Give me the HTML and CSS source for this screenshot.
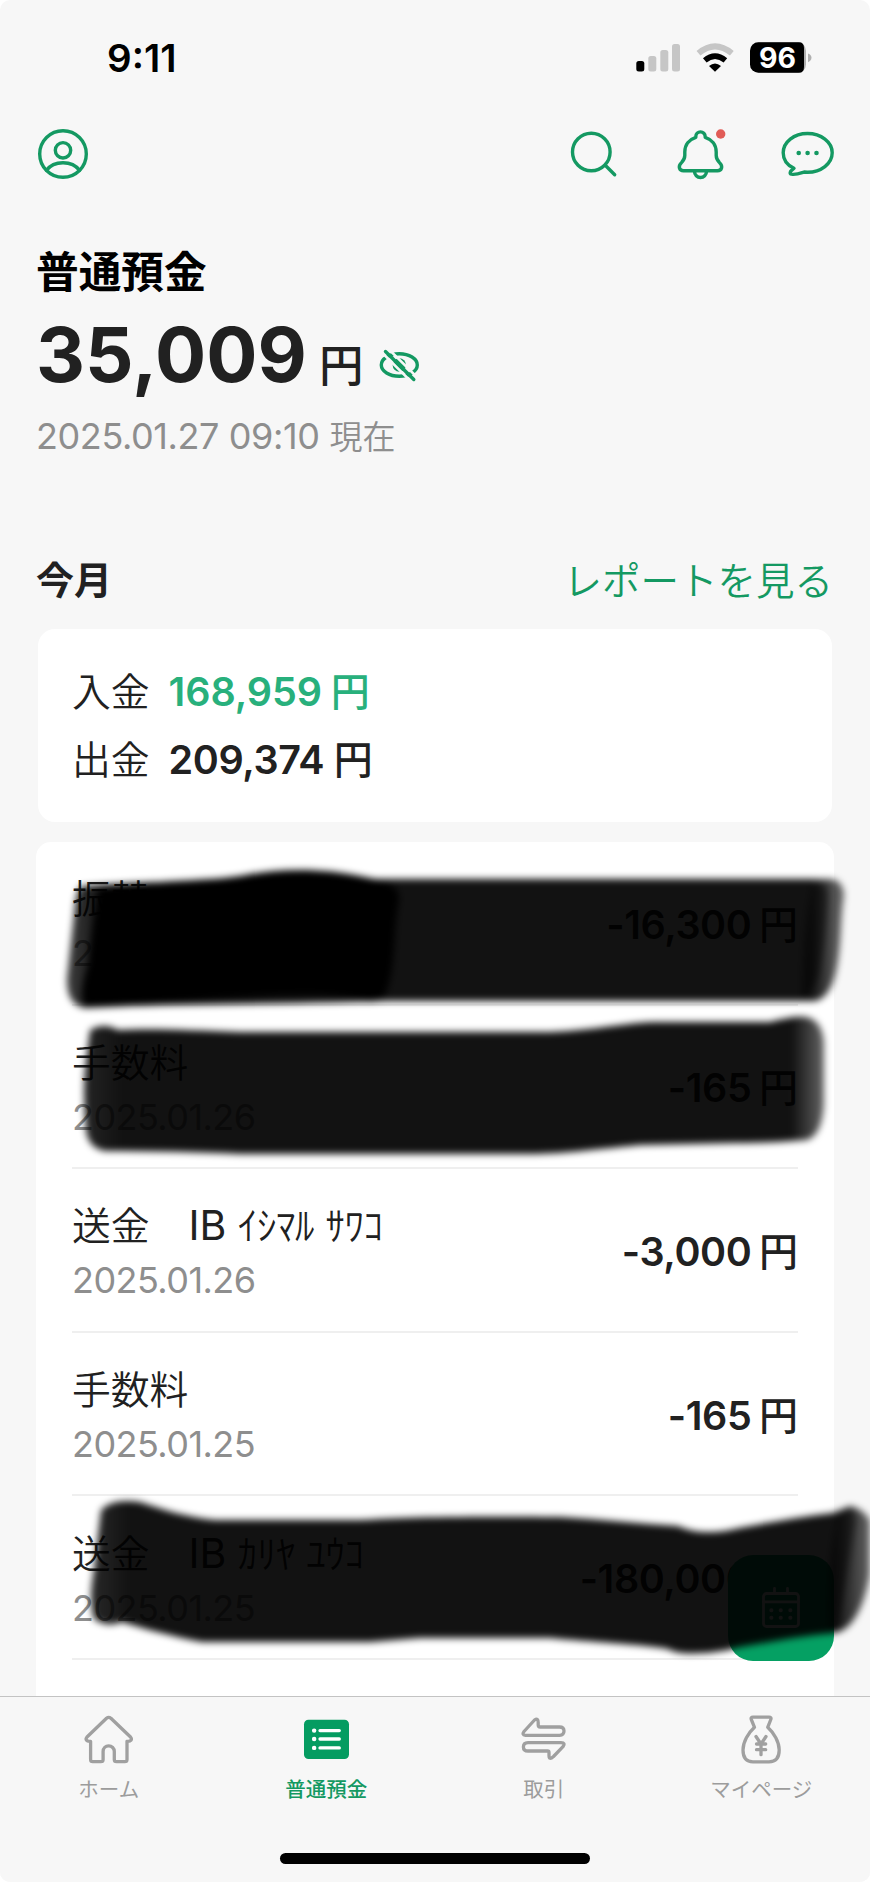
FILE: index.html
```html
<!DOCTYPE html>
<html lang="ja">
<head>
<meta charset="utf-8">
<title>普通預金</title>
<link rel="stylesheet" href="styles.css">
</head>
<body>
<div class="app">
  <div class="status">
    <span class="time">9:11</span>
    <svg class="status-icons" width="180" height="40" viewBox="634 38 180 40">
      <rect x="636.3" y="61" width="8" height="10.4" rx="2.5"/>
      <g fill="#c6c6c6">
        <rect x="648.3" y="56" width="8" height="15.4" rx="2.5"/>
        <rect x="660.3" y="50" width="8" height="21.4" rx="2.5"/>
        <rect x="672" y="44" width="8" height="27.4" rx="2.5"/>
      </g>
      <path d="M698.500 53.200Q715 39.500 731.800 53.200" fill="none" stroke="#c6c6c6" stroke-width="6"/>
      <path d="M704.800 60.400Q715 51.800 725.400 60.400" fill="none" stroke="#000" stroke-width="5.600"/>
      <path d="M709 66Q715 61 721 66L715 71.800Z"/>
      <rect x="750" y="42.300" width="56" height="30.500" rx="8.500" fill="#b0b0b0"/>
      <path d="M758.500 42.300H799Q804 42.300 804 48V67Q804 72.800 799 72.800H758.500A8.500 8.500 0 0 1 750 64.300V50.800A8.500 8.500 0 0 1 758.500 42.300Z"/>
      <path d="M808 53.500Q811.500 55 811.500 57.800T808 62.200Z" fill="#b0b0b0"/>
      <text class="battery" x="777.500" y="68" text-anchor="middle">96</text>
    </svg>
  </div>

  <div class="toolbar">
    <svg width="54" height="54" viewBox="36 127 54 54" class="line-icon">
      <circle cx="63" cy="154" r="23.300"/><circle cx="63" cy="150.300" r="7.700"/>
      <path d="M46.500 170.300Q52 162.700 63 162.700T79.500 170.300"/>
    </svg>
    <svg class="tools line-icon" width="270" height="54" viewBox="566 127 270 54">
      <circle cx="591.300" cy="152" r="18.800"/><path d="M605.500 165.500L614.700 174.700"/>
      <path d="M695.800 137.300V136.600A4.700 4.700 0 0 1 705.200 136.600V137.300C712 139.500 716.200 145 716.200 152V155.500C716.200 159 717.500 160.500 719.500 162.600C723.500 166.500 721.500 170.700 717.500 170.700H683.500C679.500 170.700 677.500 166.500 681.500 162.600C683.500 160.500 684.800 159 684.800 155.500V152C684.800 145 689 139.500 695.800 137.300ZM694.500 171.500A6 6 0 0 0 706.500 171.500"/>
      <circle cx="720.700" cy="134" r="4.700" class="alert"/>
      <path d="M794 168.300C786.500 165 783.200 158.700 783.200 152.800C783.200 142 794 133.500 807.500 133.500S832.200 142 832.200 152.800S821 172.300 807.500 172.300L804 172C799.500 173.500 795.500 175 791.500 174.200C789.500 173.700 790 171.500 791.500 170.500Z"/>
      <g class="dots"><circle cx="798.700" cy="153" r="2.300"/><circle cx="807.600" cy="153" r="2.300"/><circle cx="816.500" cy="153" r="2.300"/></g>
    </svg>
  </div>

  <div class="account">
    <h1 class="account-name">普通預金</h1>
    <div class="balance">
      <span class="balance-num">35,009</span><span class="balance-yen">円</span>
      <svg class="eye" width="42" height="34" viewBox="379 352 42 34">
        <ellipse cx="400.300" cy="369" rx="18" ry="11.300"/>
        <circle cx="400.300" cy="369" r="6.700" class="pupil"/>
        <path d="M387.500 351L420.500 383.500M381.500 355L414.500 388" class="gap"/>
        <path d="M386.500 355.500L414.800 383.500"/>
      </svg>
    </div>
    <div class="asof"><span class="asof-num">2025.01.27 09:10</span><span class="asof-cjk">現在</span></div>
  </div>

  <div class="month">
    <h2 class="month-name">今月</h2>
    <a class="report">レポートを見る</a>
  </div>

  <div class="summary">
    <div class="sum-row"><span class="cjk">入金</span><span class="amount in">168,959 <b>円</b></span></div>
    <div class="sum-row"><span class="cjk">出金</span><span class="amount">209,374 <b>円</b></span></div>
  </div>

  <div class="list">
    <div class="row"><div class="info"><div class="cjk">振替</div><div class="date">2</div></div><div class="amount">-16,300 <b>円</b></div></div>
    <div class="row"><div class="info"><div class="cjk">手数料</div><div class="date">2025.01.26</div></div><div class="amount">-165 <b>円</b></div></div>
    <div class="row"><div class="info"><div class="cjk">送金　<span class="latin">IB </span><span class="kana">ｲｼﾏﾙ<span class="latin"> </span>ｻﾜｺ</span></div><div class="date">2025.01.26</div></div><div class="amount">-3,000 <b>円</b></div></div>
    <div class="row"><div class="info"><div class="cjk">手数料</div><div class="date">2025.01.25</div></div><div class="amount">-165 <b>円</b></div></div>
    <div class="row"><div class="info"><div class="cjk">送金　<span class="latin">IB </span><span class="kana">ｶﾘﾔ<span class="latin"> </span>ﾕｳｺ</span></div><div class="date">2025.01.25</div></div><div class="amount">-180,000 <b>円</b></div></div>
  </div>

  <nav class="tabs">
    <div class="tab">
      <svg class="tab-icon" width="60" height="52" viewBox="79 1714 60 52"><path d="M106.500 1718.300Q108.700 1716.500 110.900 1718.300L130.500 1737C132.500 1739.500 131 1741.800 127 1741.300V1759.500Q127 1761.700 124.800 1761.700H116.500Q114.300 1761.700 114.300 1759.500V1751.500A5.600 5.600 0 0 0 103.100 1751.500V1759.500Q103.100 1761.700 100.900 1761.700H92.800Q90.600 1761.700 90.600 1759.500V1741.300C86.500 1741.800 85 1739.500 87 1737Z"/></svg>
      <span>ホーム</span>
    </div>
    <div class="tab active">
      <svg class="tab-icon" width="60" height="52" viewBox="296.500 1714 60 52"><rect class="fill" x="304.500" y="1719.700" width="45" height="39.300" rx="4.500"/><path class="white" d="M320.500 1730.600H339.800M320.500 1739H339.800M320.500 1747.900H339.800"/><path class="white bullets" d="M314.600 1730.600h.1M314.600 1739h.1M314.600 1747.900h.1"/></svg>
      <span>普通預金</span>
    </div>
    <div class="tab">
      <svg class="tab-icon" width="60" height="52" viewBox="514 1714 60 52"><path d="M524 1731.500L534.500 1720Q538.200 1717.300 538.200 1722.500V1725Q538.200 1727 540.200 1727H559.500Q564 1727 564 1731T559.500 1735.300H525.500Q521.500 1735 524 1731.500ZM563 1746.700L553.500 1756.500Q549 1760.500 549 1755.500V1752.500Q549 1751 547.500 1751H528Q523.400 1751 523.400 1746.900T528 1742.600H561Q566 1742.600 563 1746.700Z"/></svg>
      <span>取引</span>
    </div>
    <div class="tab">
      <svg class="tab-icon" width="60" height="52" viewBox="731.500 1714 60 52"><path d="M755 1727.300L751.800 1719.500Q751 1717.200 753.500 1717.200H769.500Q772.200 1717.200 771.300 1719.500L768.200 1727.300C774.500 1733 779.700 1742 779.700 1750Q779.700 1761.800 769.500 1761.800H753.500Q743.500 1761.800 743.500 1750C743.500 1742 748.700 1733 755 1727.300ZM756.500 1736.500L761.500 1744L766.500 1736.500M761.500 1744V1754.700M757 1744H766.200M757 1749.700H766.200"/></svg>
      <span>マイページ</span>
    </div>
    <div class="home-bar"></div>
  </nav>

  <div class="fab">
    <svg width="40" height="42" viewBox="761 1587 40 42"><rect x="763.500" y="1593.500" width="35" height="33" rx="3"/><path d="M763.500 1601.800H798.500M774.500 1588.500V1592.500M787.500 1588.500V1592.500"/><path class="cal-dots" d="M771.300 1610.300h.1M780.700 1610.300h.1M790.300 1610.300h.1M771.300 1617.800h.1M780.700 1617.800h.1M790.300 1617.800h.1"/></svg>
  </div>

  <svg class="marker" width="870" height="1882" viewBox="0 0 870 1882">
    <defs>
      <filter id="soft" x="-5%" y="-15%" width="110%" height="130%"><feGaussianBlur stdDeviation="3.6"/></filter>
      <linearGradient id="fade1" gradientUnits="userSpaceOnUse" x1="64" y1="0" x2="846" y2="0"><stop offset="0" stop-opacity=".75"/><stop offset=".05" stop-opacity=".93"/><stop offset=".955" stop-opacity=".93"/><stop offset="1" stop-opacity=".55"/></linearGradient>
      <linearGradient id="fade2" gradientUnits="userSpaceOnUse" x1="84" y1="0" x2="825" y2="0"><stop offset="0" stop-opacity=".86"/><stop offset=".05" stop-opacity=".93"/><stop offset=".955" stop-opacity=".93"/><stop offset="1" stop-opacity=".6"/></linearGradient>
      <linearGradient id="fade3" gradientUnits="userSpaceOnUse" x1="90" y1="0" x2="870" y2="0"><stop offset="0" stop-opacity=".84"/><stop offset=".05" stop-opacity=".93"/><stop offset=".955" stop-opacity=".93"/><stop offset="1" stop-opacity=".6"/></linearGradient>
    </defs>
    <g filter="url(#soft)">
      <path fill="url(#fade1)" d="M82 886C130 882 180 882 220 879L400 879H832Q844 882 844 896C840 920 842 945 836 972Q830 998 815 1001L390 1001C300 1004 200 1004 132 1006L84 1008Q66 1004 67 978L74 915Q76 888 82 886Z"/>
      <path fill="url(#fade2)" d="M90 1030Q104 1022 118 1030C150 1028 190 1030 240 1032L550 1032C600 1030 625 1022 660 1022H770C785 1018 797 1016 806 1017Q822 1020 824 1042V1105Q822 1135 807 1140C780 1142 760 1143 735 1143L640 1145C590 1150 560 1154 530 1154H240C200 1152 150 1151 105 1151Q88 1148 86 1130Q82 1090 86 1060Z"/>
      <path fill="url(#fade3)" d="M101 1510Q112 1498 140 1502C165 1510 185 1517 215 1520H360C400 1518 430 1516 560 1517C600 1519 640 1524 678 1526C690 1532 710 1534 730 1530C770 1522 800 1517 833 1513L850 1506Q862 1508 870 1520V1575Q860 1628 835 1633C800 1636 770 1642 740 1647C720 1653 680 1657 668 1649C640 1644 590 1642 550 1638H420L370 1642H202C170 1636 142 1628 122 1622Q106 1628 94 1619Q88 1600 94 1570Q98 1535 101 1510Z"/>
      <path d="M98 889C140 880 200 882 240 876C285 867 325 869 360 876C385 881 400 884 399 900C393 930 396 965 387 990C382 1004 370 1003 358 999C320 991 250 996 150 1003L86 1007Q77 998 88 965Q92 925 98 889Z"/>
      <path fill-opacity=".5" d="M812 884Q830 880 828 900Q826 940 820 975Q812 996 802 998Q802 940 812 884Z"/>
      <path fill-opacity=".5" d="M838 1513L852 1508L856 1520Q845 1590 838 1630L829 1630Q826 1565 838 1513Z"/>
    </g>
  </svg>
</div>
</body>
</html>
```

FILE: styles.css
```css
* { box-sizing: border-box; }
body { margin: 0; background: #fff; color: #212121; font-family: Inter, "Noto Sans CJK JP", sans-serif; }
.app { position: relative; width: 870px; height: 1882px; overflow: hidden; border-radius: 10px; background: #f7f7f7; display: flex; flex-direction: column; }
h1, h2 { margin: 0; font-family: "Noto Sans CJK JP", sans-serif; }

.status { height: 116px; padding: 38px 56px 0 107px; display: flex; justify-content: space-between; align-items: flex-start; flex: none; }
.time { font-size: 38.500px; font-weight: 600; line-height: 40px; color: #000; }
.battery { font: 700 28.500px Inter, sans-serif; fill: #fff; }

.toolbar { height: 76px; padding: 11px 34px 0 36px; display: flex; justify-content: space-between; flex: none; }
.line-icon { fill: none; stroke: #149962; stroke-width: 3.4; stroke-linecap: round; stroke-linejoin: round; }
.alert { fill: #e15c57; stroke: none; }
.dots { fill: #149962; stroke: none; }

.account { height: 348px; padding: 48px 37px 0 36px; flex: none; }
.account-name { font-size: 42.700px; line-height: 58px; font-weight: 700; color: #000; }
.balance { display: flex; align-items: baseline; height: 94px; line-height: 94px; margin-top: 9px; }
.balance-num { font-size: 76px; font-weight: 700; }
.balance-yen { font: 500 44.500px/1 "Noto Sans CJK JP", sans-serif; margin-left: 12px; }
.eye { margin: 0 0 -3px 15px; fill: none; stroke: #149962; stroke-width: 3.4; stroke-linecap: round; }
.eye .pupil { fill: #149962; stroke: none; }
.eye .gap { stroke: #f7f7f7; stroke-width: 2.600; }
.asof { margin-top: 12px; line-height: 44px; color: #8e8e8e; font-weight: 400; font-size: 36px; letter-spacing: -0.400px; display: flex; align-items: baseline; }
.asof-cjk { font: 350 33px/44px "Noto Sans CJK JP", sans-serif; letter-spacing: 0; margin-left: 10px; }

.month { height: 89px; padding: 9px 37px 0 36px; display: flex; justify-content: space-between; line-height: 58px; flex: none; }
.month-name { font-size: 38px; }
.report { font: 350 38.500px/58px "Noto Sans CJK JP", sans-serif; color: #149962; }

.summary { height: 193px; margin: 0 38px; padding: 26px 34px; border-radius: 17px; background: #fff; flex: none; }
.sum-row { display: flex; align-items: baseline; height: 68px; line-height: 68px; gap: 19px; }
.cjk { font-family: "Noto Sans CJK JP", sans-serif; font-weight: 350; font-size: 38.800px; white-space: pre; }
.latin { font-family: Inter, sans-serif; font-weight: 400; font-size: 41px; }
.kana { letter-spacing: -0.300px; }
.amount { font-size: 39.500px; font-weight: 600; white-space: pre; letter-spacing: -0.400px; word-spacing: -2px; }
.amount b { font: 500 39px/1 "Noto Sans CJK JP", sans-serif; letter-spacing: 0; }
.sum-row .amount { word-spacing: 0; }
.in { color: #28b07c; letter-spacing: 0; word-spacing: 0; }
.sum-row .in { letter-spacing: -0.100px; word-spacing: -1px; }

.list { margin: 20px 36px 0; padding: 0 36px; border-radius: 15px 15px 0 0; background: #fff; flex: 1; min-height: 0; overflow: hidden; }
.row { height: 163.600px; padding-top: 4px; display: flex; align-items: center; justify-content: space-between; border-bottom: 2px solid #efefef; }
.info .cjk { height: 56px; line-height: 55px; }
.info .date { height: 55px; line-height: 57px; font-size: 36px; letter-spacing: -0.550px; color: #8e8e8e; }

.tabs { height: 186px; padding-top: 17px; border-top: 1px solid #c3c3c3; background: #f7f7f7; display: grid; grid-template-columns: repeat(4, 1fr); grid-template-rows: 139px 12px; flex: none; }
.tab { display: flex; flex-direction: column; align-items: center; gap: 6px; color: #9c9c9c; font: 400 20.500px/32px "Noto Sans CJK JP", sans-serif; }
.tab-icon { fill: none; stroke: #a0a0a0; stroke-width: 3.300; stroke-linecap: round; stroke-linejoin: round; }
.active { color: #149962; font-weight: 500; }
.tab-icon .fill { fill: #059c61; stroke: none; }
.tab-icon .white { stroke: #fff; stroke-width: 3.300; }
.tab-icon .bullets { stroke-width: 4.400; }
.home-bar { grid-column: 1 / -1; justify-self: center; width: 310px; height: 11px; border-radius: 6px; background: #000; }

.fab { position: absolute; left: 728px; top: 1555px; width: 106px; height: 106px; border-radius: 25px; background: #05a063; display: grid; place-items: center; }
.fab svg { fill: none; stroke: #fff; stroke-width: 2.800; stroke-linecap: round; }
.fab .cal-dots { stroke-width: 4; }
.marker { position: absolute; left: 0; top: 0; }
```
